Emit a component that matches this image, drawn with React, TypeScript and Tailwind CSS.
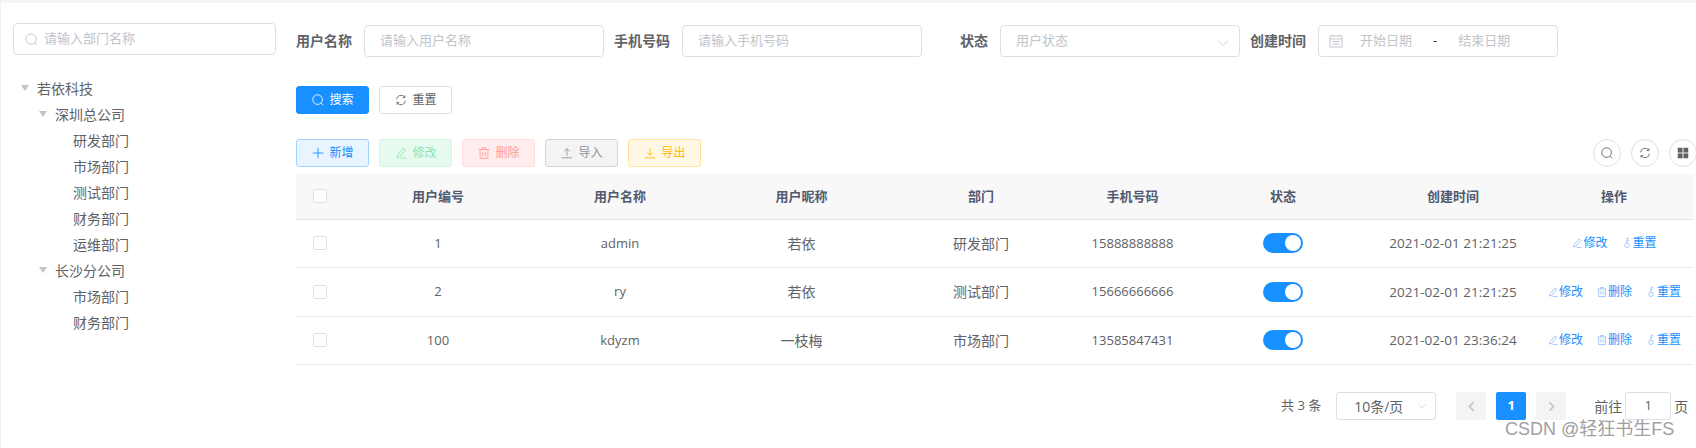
import React from "react";

type IP = { className?: string };
const S = ({ className, children }: IP & { children: React.ReactNode }) => (
  <svg viewBox="0 0 16 16" fill="none" stroke="currentColor" strokeWidth="1" className={className}>
    {children}
  </svg>
);
const SearchI = (p: IP) => (
  <S {...p}>
    <circle cx="7.5" cy="7.5" r="5.5" />
    <path d="M11.5 11.5L14 14" />
  </S>
);
const RefreshI = (p: IP) => (
  <S {...p}>
    <path d="M3 7.2A5 5 0 0 1 12 4.6" />
    <path d="M13 8.8A5 5 0 0 1 4 11.4" />
    <path d="M12.6 2.6V5.2H10" />
    <path d="M3.4 13.4V10.8H6" />
  </S>
);
const PlusI = (p: IP) => (
  <S {...p}>
    <path d="M8 2V14M2 8H14" />
  </S>
);
const EditI = (p: IP) => (
  <S {...p}>
    <path d="M4 10.5L10.5 2.5L13 4.5L6.5 12.5L3.5 13.5Z" />
    <path d="M7.5 14H14" />
  </S>
);
const TrashI = (p: IP) => (
  <S {...p}>
    <path d="M2 4H14M6 4V2H10V4" />
    <path d="M3.5 4V14H12.5V4" />
    <path d="M6.5 6.5V11.5M9.5 6.5V11.5" />
  </S>
);
const UploadI = (p: IP) => (
  <S {...p}>
    <path d="M2 13.5H14M8 11V3M4.8 6L8 3L11.2 6" />
  </S>
);
const DownloadI = (p: IP) => (
  <S {...p}>
    <path d="M2 13.5H14M8 2.5V10.5M4.8 7.5L8 10.5L11.2 7.5" />
  </S>
);
const KeyI = (p: IP) => (
  <S {...p}>
    <circle cx="8" cy="11" r="3" />
    <path d="M8 8V1.5H11M8 4.5H10.5" />
  </S>
);
const CalendarI = (p: IP) => (
  <S {...p}>
    <rect x="2" y="3" width="12" height="11" />
    <path d="M2 6H14M5 1.5V3M11 1.5V3M4.5 8.5H11.5M4.5 11H11.5" />
  </S>
);
const ChevronDownI = (p: IP) => (
  <S {...p}>
    <path d="M2.5 5.5L8 11L13.5 5.5" />
  </S>
);
const ChevronSide = ({ className, left }: IP & { left?: boolean }) => (
  <svg viewBox="0 0 16 16" fill="none" stroke="currentColor" strokeWidth="2" className={className}>
    <path d={left ? "M10.5 3L5.5 8L10.5 13" : "M5.5 3L10.5 8L5.5 13"} />
  </svg>
);
const GridI = (p: IP) => (
  <svg viewBox="0 0 16 16" fill="currentColor" className={p.className}>
    <rect x="2" y="2" width="5.5" height="5.5" />
    <rect x="8.5" y="2" width="5.5" height="5.5" />
    <rect x="2" y="8.5" width="5.5" height="5.5" />
    <rect x="8.5" y="8.5" width="5.5" height="5.5" />
  </svg>
);
const Tri = () => <span className="mr-[4px] h-0 w-0 border-x-[4px] border-t-[6px] border-x-transparent border-t-[#c0c4cc]" />;

const tree: { t: string; l: 0 | 1 | 2 }[] = [
  { t: "若依科技", l: 0 },
  { t: "深圳总公司", l: 1 },
  { t: "研发部门", l: 2 },
  { t: "市场部门", l: 2 },
  { t: "测试部门", l: 2 },
  { t: "财务部门", l: 2 },
  { t: "运维部门", l: 2 },
  { t: "长沙分公司", l: 1 },
  { t: "市场部门", l: 2 },
  { t: "财务部门", l: 2 },
];

const rows = [
  { id: "1", name: "admin", nick: "若依", dept: "研发部门", phone: "15888888888", time: "2021-02-01 21:21:25", del: false },
  { id: "2", name: "ry", nick: "若依", dept: "测试部门", phone: "15666666666", time: "2021-02-01 21:21:25", del: true },
  { id: "100", name: "kdyzm", nick: "一枝梅", dept: "市场部门", phone: "13585847431", time: "2021-02-01 23:36:24", del: true },
];

const Label = ({ children, className }: { children: React.ReactNode; className: string }) => (
  <label className={`text-[14px] font-bold leading-none text-[#606266] ${className}`}>{children}</label>
);
const Field = ({ text, className, children }: { text: string; className: string; children?: React.ReactNode }) => (
  <div className={`flex h-[32px] items-center rounded-[4px] border border-[#dcdfe6] pl-[15px] text-[13px] text-[#c0c4cc] ${className}`}>
    {text}
    {children}
  </div>
);
const Btn = ({ icon, text, className }: { icon: React.ReactNode; text: string; className: string }) => (
  <div className={`flex h-[28px] w-[73px] items-center justify-center gap-[4px] rounded-[3px] border text-[12px] ${className}`}>
    {icon}
    <span>{text}</span>
  </div>
);
const Act = ({ icon, text }: { icon: React.ReactNode; text: string }) => (
  <span className="flex items-center">
    {icon}
    {text}
  </span>
);
const Circle = ({ children, className }: { children: React.ReactNode; className?: string }) => (
  <div className={`flex h-[28px] w-[28px] items-center justify-center rounded-full border border-[#dcdfe6] ${className ?? "text-[#606266]"}`}>{children}</div>
);

export default function App() {
  return (
    <div
      className="relative h-[448px] w-[1696px] overflow-hidden border-l border-[#f2f2f2] bg-white text-[#606266]"
      style={{ fontFamily: '"Open Sans","Noto Sans CJK SC",sans-serif' }}
    >
      <div className="h-[3px] bg-[#f5f5f5]" />
      <div className="flex">
        {/* left */}
        <aside className="w-[295px] shrink-0 pl-[12px] pr-[20px] pt-[20px]">
          <div className="flex h-[32px] items-center gap-[5px] rounded-[4px] border border-[#dcdfe6] pl-[10px] text-[13px] text-[#c0c4cc]">
            <SearchI className="h-[15px] w-[15px]" />
            请输入部门名称
          </div>
          <ul className="mt-[20px] text-[14px]">
            {tree.map((n, i) => (
              <li
                key={i}
                className={`flex h-[26px] items-center ${n.l === 0 ? "pl-[8px]" : n.l === 1 ? "pl-[26px]" : "pl-[56px]"}`}
              >
                {n.l < 2 && <Tri />}
                <span className="ml-[4px]">{n.t}</span>
              </li>
            ))}
          </ul>
        </aside>

        {/* right */}
        <main className="min-w-0 flex-1 pr-[2px] pt-[22px]">
          <form className="flex items-center">
            <Label className="w-[68px]">用户名称</Label>
            <Field text="请输入用户名称" className="w-[240px]" />
            <Label className="ml-[10px] w-[68px]">手机号码</Label>
            <Field text="请输入手机号码" className="w-[240px]" />
            <Label className="ml-[38px] w-[40px]">状态</Label>
            <Field text="用户状态" className="w-[240px] justify-between pr-[9px]">
              <ChevronDownI className="mt-[3px] h-[14px] w-[14px]" />
            </Field>
            <Label className="ml-[10px] w-[68px]">创建时间</Label>
            <div className="flex h-[32px] w-[240px] items-center rounded-[4px] border border-[#dcdfe6] pl-[9px] text-[13px] text-[#c0c4cc]">
              <CalendarI className="h-[16px] w-[16px]" />
              <span className="ml-[16px]">开始日期</span>
              <span className="ml-[21px] text-[#303133]">-</span>
              <span className="ml-[21px]">结束日期</span>
            </div>
          </form>
          <div className="mt-[29px] flex gap-[10px]">
            <Btn icon={<SearchI className="h-[14px] w-[14px]" />} text="搜索" className="border-[#1890ff] bg-[#1890ff] text-white" />
            <Btn icon={<RefreshI className="h-[14px] w-[14px]" />} text="重置" className="border-[#dcdfe6] bg-white text-[#606266]" />
          </div>
          <div className="mr-[-3px] mt-[25px] flex items-center">
            <div className="flex gap-[10px]">
              <Btn icon={<PlusI className="h-[14px] w-[14px]" />} text="新增" className="border-[#a3d3ff] bg-[#e8f4ff] text-[#1890ff]" />
              <Btn icon={<EditI className="h-[14px] w-[14px]" />} text="修改" className="border-[#d0f5e0] bg-[#e7faf0] text-[#8ae5b3]" />
              <Btn icon={<TrashI className="h-[14px] w-[14px]" />} text="删除" className="border-[#ffdbdb] bg-[#ffeded] text-[#ff9a9a]" />
              <Btn icon={<UploadI className="h-[14px] w-[14px]" />} text="导入" className="border-[#d3d4d6] bg-[#f4f4f5] text-[#909399]" />
              <Btn icon={<DownloadI className="h-[14px] w-[14px]" />} text="导出" className="border-[#ffe399] bg-[#fff8e6] text-[#ffba00]" />
            </div>
            <div className="ml-auto flex gap-[10px]">
              <Circle>
                <SearchI className="h-[14px] w-[14px]" />
              </Circle>
              <Circle>
                <RefreshI className="h-[14px] w-[14px]" />
              </Circle>
              <Circle>
                <GridI className="h-[14px] w-[14px]" />
              </Circle>
            </div>
          </div>

          <table className="mt-[7px] w-full table-fixed border-collapse text-center text-[13px]">
            <thead>
              <tr className="h-[45px] border-b border-[#dfe6ec] bg-[#f8f8f9] font-bold text-[#515a6e]">
                <th className="w-[48px] font-bold">
                  <span className="ml-[2px] block h-[14px] w-[14px] translate-x-[15px] rounded-[2px] border border-[#dcdfe6] bg-white" />
                </th>
                <th className="w-[188px] font-bold">用户编号</th>
                <th className="w-[176px] font-bold">用户名称</th>
                <th className="w-[187px] font-bold">用户昵称</th>
                <th className="w-[172px] font-bold">部门</th>
                <th className="w-[131px] font-bold">手机号码</th>
                <th className="w-[170px] font-bold">状态</th>
                <th className="w-[170px] font-bold">创建时间</th>
                <th className="pr-[4px] font-bold">操作</th>
              </tr>
            </thead>
            <tbody>
              {rows.map((r) => (
                <tr key={r.id} className="h-[48.5px] border-b border-[#e6ebf5]">
                  <td>
                    <span className="ml-[2px] block h-[14px] w-[14px] translate-x-[15px] rounded-[2px] border border-[#dcdfe6] bg-white" />
                  </td>
                  <td>{r.id}</td>
                  <td>{r.name}</td>
                  <td className="text-[14px]">{r.nick}</td>
                  <td className="text-[14px]">{r.dept}</td>
                  <td>{r.phone}</td>
                  <td>
                    <span className="mx-auto flex h-[20px] w-[40px] items-center justify-end rounded-full bg-[#1890ff] pr-[2px]">
                      <span className="h-[16px] w-[16px] rounded-full bg-white" />
                    </span>
                  </td>
                  <td className="text-[13.5px]">{r.time}</td>
                  <td className="pr-[4px]">
                    <div className="flex items-center justify-center gap-[13px] text-[12px] text-[#1890ff]">
                      <Act icon={<EditI className="h-[12px] w-[12px] text-[#8ab8f8]" />} text="修改" />
                      {r.del && <Act icon={<TrashI className="h-[12px] w-[12px] text-[#8ab8f8]" />} text="删除" />}
                      <Act icon={<KeyI className="h-[12px] w-[12px] text-[#8ab8f8]" />} text="重置" />
                    </div>
                  </td>
                </tr>
              ))}
            </tbody>
          </table>

          <nav className="mt-[27px] flex h-[28px] items-center text-[13px]">
            <span className="ml-[985px]">共 3 条</span>
            <div className="ml-[15px] flex h-[28px] w-[100px] items-center justify-between rounded-[3px] border border-[#dcdfe6] pl-[17px] pr-[8px] text-[14px]">
              10条/页
              <ChevronDownI className="h-[10px] w-[10px] text-[#c0c4cc]" />
            </div>
            <div className="ml-[20px] flex h-[28px] w-[30px] items-center justify-center rounded-[2px] bg-[#f4f4f5] text-[#c0c4cc]">
              <ChevronSide left className="h-[13px] w-[13px]" />
            </div>
            <div className="ml-[10px] flex h-[28px] w-[30px] items-center justify-center rounded-[2px] bg-[#1890ff] font-bold text-white">1</div>
            <div className="ml-[10px] flex h-[28px] w-[30px] items-center justify-center rounded-[2px] bg-[#f4f4f5] text-[#c0c4cc]">
              <ChevronSide className="h-[13px] w-[13px]" />
            </div>
            <span className="ml-[28px] text-[14px]">前往</span>
            <div className="ml-[3px] flex h-[28px] w-[46px] items-center justify-center rounded-[3px] border border-[#dcdfe6]">1</div>
            <span className="ml-[3px] text-[14px]">页</span>
          </nav>
        </main>
      </div>

      <div className="absolute left-[1504px] top-[417px] text-[18px] leading-[24px] text-[#a0a0a0]" style={{ fontFamily: '"Liberation Sans","Noto Sans CJK SC",sans-serif' }}>
        CSDN @轻狂书生FS
      </div>
    </div>
  );
}
